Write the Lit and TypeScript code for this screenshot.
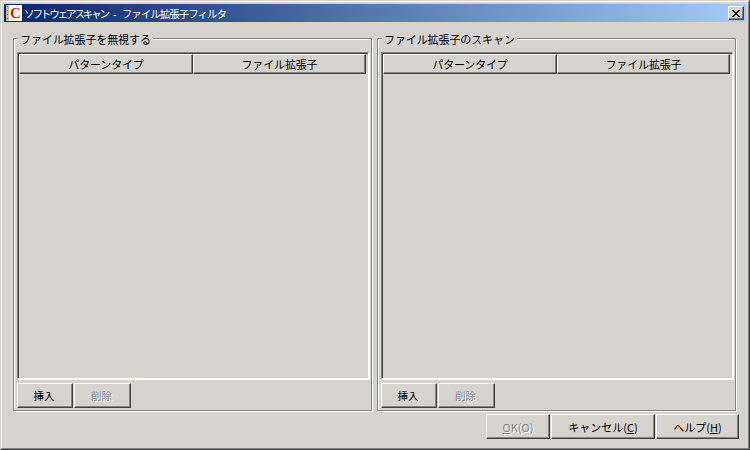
import { LitElement, html, css } from "lit";
import { customElement } from "lit/decorators.js";

@customElement("app-root")
export class AppRoot extends LitElement {
  static styles = css`
    :host {
      display: block;
      width: 750px;
      height: 450px;
      font-family: "Noto Sans CJK JP", "Liberation Sans", sans-serif;
      font-size: 11px;
      color: #000;
    }
    .window {
      box-sizing: border-box;
      width: 750px;
      height: 450px;
      background: #d6d3ce;
      border: 1px solid;
      border-color: #d6d3ce #424142 #424142 #d6d3ce;
      display: flex;
      flex-direction: column;
    }
    .frame {
      flex: 1;
      display: flex;
      flex-direction: column;
      border: 1px solid;
      border-color: #fff #848284 #848284 #fff;
      padding: 2px;
      min-height: 0;
    }
    .title {
      height: 18px;
      display: flex;
      align-items: center;
      background: linear-gradient(90deg, #08246b, #a5cbf7);
      color: #fff;
      padding: 0 2px;
      gap: 2px;
      font-size: 10.5px;
      flex: none;
    }
    .title-text { flex: 1; white-space: nowrap; display: flex; gap: 5px; }
    .kana { letter-spacing: -2.1px; }
    .rest { letter-spacing: -1px; }
    .icon { width: 16px; height: 16px; flex: none; display: block; }
    .icon-letter {
      font-family: "Liberation Serif", serif;
      font-weight: 700;
      font-size: 15px;
      fill: #e0101a;
    }
    .close {
      box-sizing: border-box;
      width: 16px;
      height: 14px;
      background: #d6d3ce;
      border: 1px solid;
      border-color: #fff #424142 #424142 #fff;
      box-shadow: inset -1px -1px 0 #848284;
      display: flex;
      align-items: center;
      justify-content: center;
      padding: 0;
    }
    .close svg { display: block; }
    .body {
      flex: 1;
      display: flex;
      flex-direction: column;
      padding: 16px 7px 7px 9px;
      min-height: 0;
    }
    .groups { display: flex; gap: 5px; flex: none; }
    .group {
      position: relative;
      box-sizing: border-box;
      width: 359px;
      height: 373px;
      border: 1px solid #848284;
      box-shadow: 1px 1px 0 #fff, inset 1px 1px 0 #fff;
      padding: 13px 2px 2px 3px;
      display: flex;
      flex-direction: column;
    }
    .legend {
      position: absolute;
      left: 4px;
      top: -8px;
      background: #d6d3ce;
      padding: 0 2px 0 2px;
      font-size: 11px;
      line-height: 16px;
      letter-spacing: -0.1px;
      white-space: nowrap;
    }
    .table {
      box-sizing: border-box;
      height: 327px;
      flex: none;
      border: 1px solid;
      border-color: #848284 #fff #fff #848284;
      box-shadow: inset 1px 1px 0 #424142, 1px 1px 0 #fff;
      padding: 1px 0 0 1px;
      display: flex;
      flex-direction: column;
    }
    .thead { display: grid; grid-template-columns: 174px 173px; flex: none; }
    .th {
      box-sizing: border-box;
      height: 20px;
      border: 1px solid;
      border-color: #fff #424142 #424142 #fff;
      box-shadow: inset -1px -1px 0 #848284;
      display: flex;
      align-items: center;
      justify-content: center;
      letter-spacing: -0.15px;
    }
    .actions { display: flex; gap: 1px; margin-top: 4px; flex: none; }
    .btn {
      box-sizing: border-box;
      font: inherit;
      color: #000;
      background: #d6d3ce;
      border: 1px solid;
      border-color: #fff #424142 #424142 #fff;
      box-shadow: inset -1px -1px 0 #848284;
      padding: 0;
      margin: 0;
      display: flex;
      align-items: center;
      justify-content: center;
      white-space: nowrap;
    }
    .btn.small { height: 25px; font-size: 10.5px; padding-right: 2px; }
    .btn.w56 { width: 56px; }
    .btn.w57 { width: 57px; }
    .btn.disabled { color: #848284; text-shadow: 1px 1px 0 #fff; }
    .footer { display: flex; justify-content: flex-end; gap: 1px; margin-top: 3px; flex: none; }
    .footer .btn { height: 25px; }
    .ok { width: 64px; }
    .cancel { width: 104px; }
    .help { width: 83px; }
    u { text-underline-offset: 1px; }
  `;

  private group(title: string) {
    return html`<div class="group">
      <div class="legend">${title}</div>
      <div class="table">
        <div class="thead">
          <div class="th">パターンタイプ</div>
          <div class="th">ファイル拡張子</div>
        </div>
      </div>
      <div class="actions">
        <button class="btn small w56">挿入</button>
        <button class="btn small w57 disabled">削除</button>
      </div>
    </div>`;
  }

  render() {
    return html`<div class="window">
      <div class="frame">
        <div class="title">
          <svg class="icon" viewBox="0 0 16 16" aria-hidden="true">
            <rect width="16" height="16" fill="#fff" />
            <rect x="0" y="0" width="3" height="16" fill="#c9bd92" />
            <path d="M1 1h1v1h-1zM1 5h1v1h-1zM1 9h1v1h-1zM1 13h1v1h-1z" fill="#6b6344" />
            <text class="icon-letter" x="4" y="13">C</text>
          </svg>
          <span class="title-text"><span class="kana">ソフトウェアスキャン</span><span>-</span><span class="rest">ファイル拡張子フィルタ</span></span>
          <div class="close">
            <svg width="8" height="7" viewBox="0 0 8 7" aria-hidden="true">
              <path d="M0 0h2v1h-2zM6 0h2v1h-2zM1 1h2v1h-2zM5 1h2v1h-2zM2 2h4v1h-4zM3 3h2v1h-2zM2 4h4v1h-4zM1 5h2v1h-2zM5 5h2v1h-2zM0 6h2v1h-2zM6 6h2v1h-2z" fill="#000" />
            </svg>
          </div>
        </div>
        <div class="body">
          <div class="groups">
            ${this.group("ファイル拡張子を無視する")}
            ${this.group("ファイル拡張子のスキャン")}
          </div>
          <div class="footer">
            <button class="btn ok disabled"><span><u>O</u>K(O)</span></button>
            <button class="btn cancel"><span>キャンセル(<u>C</u>)</span></button>
            <button class="btn help"><span>ヘルプ(<u>H</u>)</span></button>
          </div>
        </div>
      </div>
    </div>`;
  }
}
